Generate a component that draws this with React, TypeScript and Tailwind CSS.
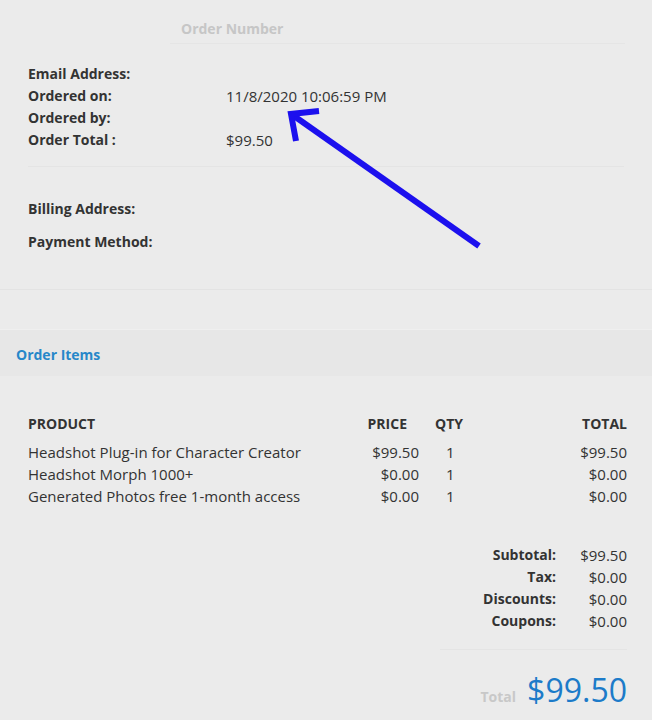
const ITEMS = [
  { name: "Headshot Plug-in for Character Creator", price: "$99.50", qty: 1, total: "$99.50" },
  { name: "Headshot Morph 1000+", price: "$0.00", qty: 1, total: "$0.00" },
  { name: "Generated Photos free 1-month access", price: "$0.00", qty: 1, total: "$0.00" },
];

const SUMMARY = [
  ["Subtotal:", "$99.50"],
  ["Tax:", "$0.00"],
  ["Discounts:", "$0.00"],
  ["Coupons:", "$0.00"],
];

function InfoRow({ label, value }: { label: string; value?: string }) {
  return (
    <div className="flex h-[22px] items-center">
      <span className="w-[198px] text-[14px] font-bold">{label}</span>
      <span>{value}</span>
    </div>
  );
}

export default function App() {
  return (
    <div
      className="relative w-[652px] min-h-[720px] overflow-hidden bg-[#ebebeb] text-[15px] leading-[22px] text-[#333]"
      style={{ fontFamily: '"Open Sans", "Noto Sans", sans-serif' }}
    >
      {/* order header */}
      <div className="ml-[170px] mr-[27px] h-[44px] border-b border-[#e5e5e5] pl-[11px] pt-[17px]">
        <span className="text-[14px] font-bold text-[#c6c6c6]">Order Number</span>
      </div>

      <div className="mx-[28px] border-b border-[#e4e4e4] pb-[15px] pt-[19px]">
        <InfoRow label="Email Address:" />
        <InfoRow label="Ordered on:" value="11/8/2020 10:06:59 PM" />
        <InfoRow label="Ordered by:" />
        <InfoRow label="Order Total :" value="$99.50" />
      </div>

      <div className="border-b border-[#e3e3e3] pb-[36px] pl-[28px] pt-[31px] text-[14px]">
        <div className="h-[22px] font-bold">Billing Address:</div>
        <div className="mt-[11px] h-[22px] font-bold">Payment Method:</div>
      </div>

      <div className="h-[40px] border-b border-[#efefef]" />

      <div className="flex h-[46px] items-center bg-[#e7e7e7] px-[16px] pt-[4px]">
        <span className="text-[14px] font-bold text-[#2787c9]">Order Items</span>
      </div>

      {/* items table */}
      <div className="ml-[28px] mr-[25px] pt-[37px]">
        <div className="grid h-[22px] grid-cols-[311px_80px_60px_1fr] items-center text-[14px] font-bold">
          <span>PRODUCT</span>
          <span className="pr-[12px] text-right">PRICE</span>
          <span className="pl-[16px]">QTY</span>
          <span className="text-right">TOTAL</span>
        </div>
        <div className="mt-[6px]">
          {ITEMS.map((item) => (
            <div key={item.name} className="grid h-[22px] grid-cols-[311px_80px_60px_1fr] items-center">
              <span>{item.name}</span>
              <span className="text-right">{item.price}</span>
              <span className="pl-[27px]">{item.qty}</span>
              <span className="text-right">{item.total}</span>
            </div>
          ))}
        </div>
      </div>

      {/* totals */}
      <div className="ml-[440px] mr-[25px] mt-[37px] border-b border-[#e4e4e4] pb-[17px]">
        {SUMMARY.map(([label, value]) => (
          <div key={label} className="flex h-[22px] items-center justify-end">
            <span className="text-[14px] font-bold">{label}</span>
            <span className="w-[71px] text-right">{value}</span>
          </div>
        ))}
      </div>

      <div className="mr-[25px] mt-[20px] flex items-baseline justify-end gap-[11px]">
        <span className="text-[14px] font-bold text-[#c8c8c8]">Total</span>
        <span className="text-[32px] leading-[40px] text-[#1c7bc9]">$99.50</span>
      </div>

      {/* annotation arrow */}
      <svg
        className="pointer-events-none absolute left-0 top-0"
        width="652"
        height="720"
        viewBox="0 0 652 720"
      >
        <g stroke="#1c10ee" strokeWidth="6" fill="none" strokeLinecap="butt" strokeLinejoin="miter">
          <path d="M479 246 L294 116" />
          <path d="M319 111 L291 114 L296 141" />
        </g>
      </svg>
    </div>
  );
}
